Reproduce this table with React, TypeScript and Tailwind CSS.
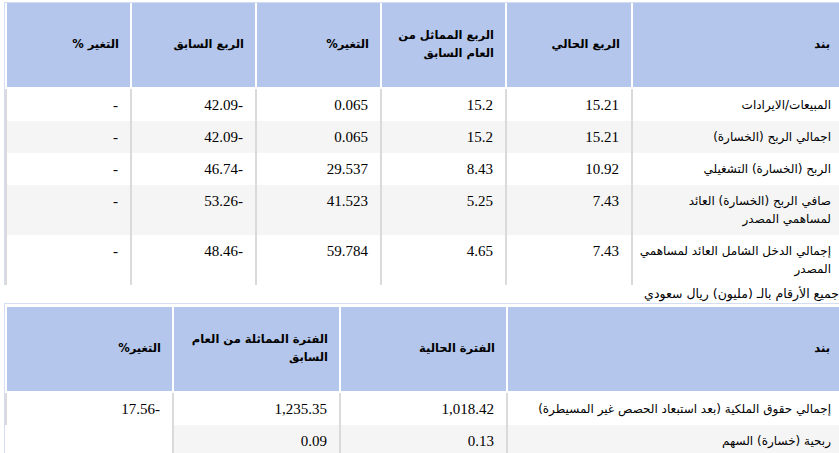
const quarterHead = [
  ['بند'],
  ['الربع الحالي'],
  ['الربع المماثل من', 'العام السابق'],
  ['التغير%'],
  ['الربع السابق'],
  ['التغير %'],
]

const quarterRows = [
  { label: ['المبيعات/الايرادات'], cells: ['15.21', '15.2', '0.065', '-42.09', '-'] },
  { label: ['اجمالي الربح (الخسارة)'], cells: ['15.21', '15.2', '0.065', '-42.09', '-'] },
  { label: ['الربح (الخسارة) التشغيلي'], cells: ['10.92', '8.43', '29.537', '-46.74', '-'] },
  { label: ['صافي الربح (الخسارة) العائد', 'لمساهمي المصدر'], cells: ['7.43', '5.25', '41.523', '-53.26', '-'] },
  { label: ['إجمالي الدخل الشامل العائد لمساهمي', 'المصدر'], cells: ['7.43', '4.65', '59.784', '-48.46', '-'] },
]

const periodHead = [
  ['بند'],
  ['الفترة الحالية'],
  ['الفترة المماثلة من العام', 'السابق'],
  ['التغير%'],
]

const periodRows = [
  { label: ['إجمالي حقوق الملكية (بعد استبعاد الحصص غير المسيطرة)'], cells: ['1,018.42', '1,235.35', '-17.56'] },
  { label: ['ربحية (خسارة) السهم'], cells: ['0.13', '0.09'] },
]

function Lines({ lines }: { lines: string[] }) {
  return (
    <>
      {lines.map((l, i) => (
        <div key={i} className="whitespace-nowrap">
          {l}
        </div>
      ))}
    </>
  )
}

function Head({ cells }: { cells: string[][] }) {
  return (
    <>
      {cells.map((c, i) => (
        <div
          key={i}
          className="h-[86px] flex flex-col justify-center pb-[2px] bg-[#b4c6eb] border-l-2 border-b-2 border-white pr-[11px] font-['DejaVu_Sans',sans-serif] text-[11.5px] font-bold leading-[18px] text-black"
        >
          <Lines lines={c} />
        </div>
      ))}
    </>
  )
}

function Body({ rows }: { rows: { label: string[]; cells: string[] }[] }) {
  return (
    <>
      {rows.map((r, i) => {
        const bg = i % 2 === 1 ? 'bg-[#f5f5f5]' : 'bg-white'
        return (
          <div key={i} className="contents">
            <div
              className={`${bg} border-l-2 border-[#dadada] pr-[10px] pt-[7px] pb-[7px] font-['DejaVu_Sans',sans-serif] text-[12px] leading-[18px] text-black`}
            >
              <Lines lines={r.label} />
            </div>
            {r.cells.map((c, j) => (
              <div
                key={j}
                className={`${bg} border-l-2 border-[#dadada] pr-3 pt-[7px] pb-[7px] font-['Liberation_Serif',serif] text-[15px] leading-[18px] text-black`}
              >
                {c}
              </div>
            ))}
          </div>
        )
      })}
    </>
  )
}

export default function App() {
  return (
    <div className="w-[839px] h-[453px] overflow-hidden bg-white">
      <div className="ml-[4px] mt-[2px] w-[837px] border-l border-t border-[#d3def4]" dir="rtl">
        <div className="grid grid-cols-[210px_126px_125px_125px_125px_125px]">
          <Head cells={quarterHead} />
          <Body rows={quarterRows} />
        </div>
      </div>
      <div
        className="w-[839px] h-[18px] leading-[18px] font-['DejaVu_Sans',sans-serif] text-[12.5px] text-black"
        dir="rtl"
      >
        جميع الأرقام بالـ (مليون) ريال سعودي
      </div>
      <div className="ml-[4px] w-[837px] border-l border-t border-[#d3def4] pt-[3px]" dir="rtl">
        <div className="grid grid-cols-[335px_167px_167px_167px]">
          <Head cells={periodHead} />
          <Body rows={periodRows} />
        </div>
      </div>
    </div>
  )
}
